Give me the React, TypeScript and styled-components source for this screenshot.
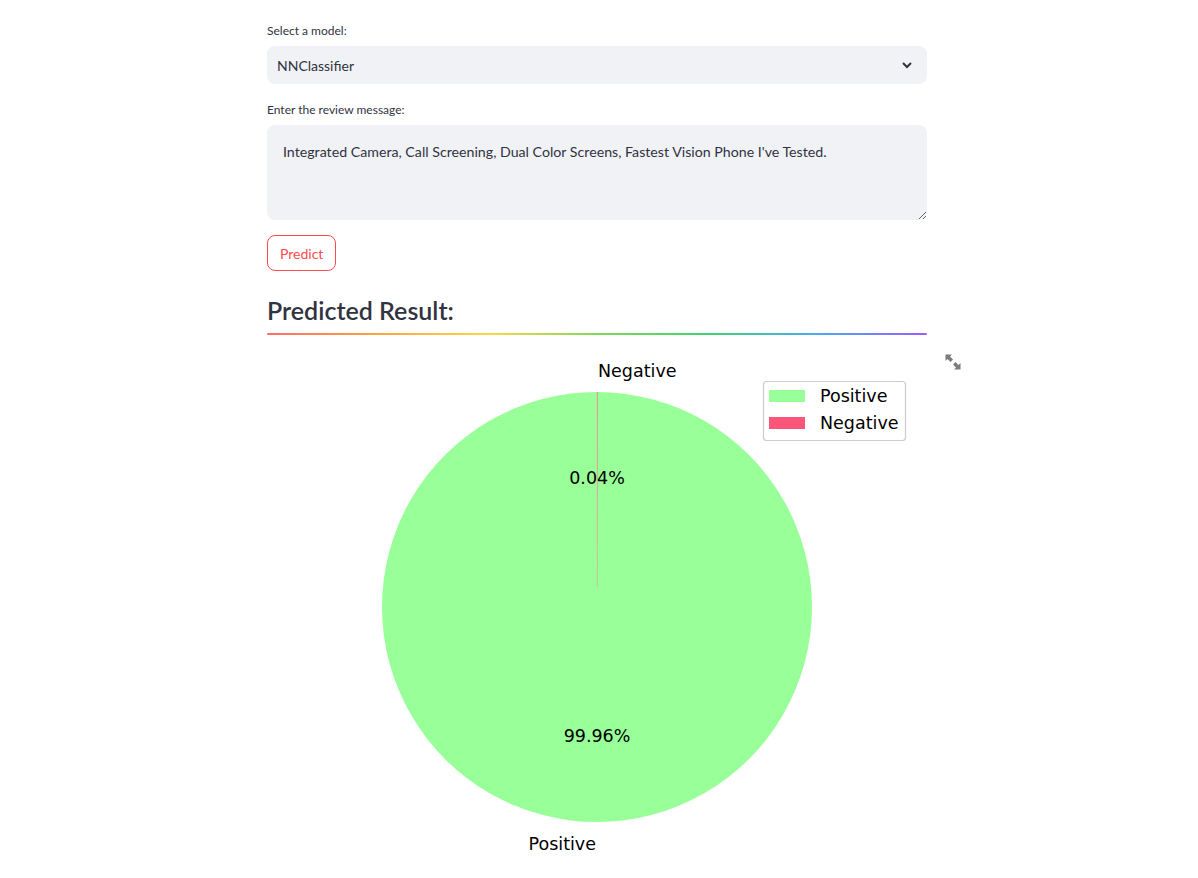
import React from "react";
import styled, { createGlobalStyle } from "styled-components";

const Global = createGlobalStyle`
  html, body { margin: 0; padding: 0; background: #ffffff; }
  body { font-family: Lato, "Open Sans", sans-serif; color: rgb(49, 51, 63); }
  * { box-sizing: border-box; }
`;

const Page = styled.div`
  display: flex;
  justify-content: center;
  padding: 22px 4px 0 0;
`;

const Column = styled.main`
  width: 660px;
  display: flex;
  flex-direction: column;
`;

const Field = styled.div`
  display: flex;
  flex-direction: column;
  margin-bottom: ${(p: { $mb?: number }) => p.$mb ?? 0}px;
`;

const Label = styled.label`
  font-size: 12px;
  line-height: 18px;
  height: 18px;
  margin-bottom: 6px;
  color: rgb(49, 51, 63);
`;

const SelectBox = styled.div`
  height: 38px;
  border-radius: 8px;
  background: rgb(240, 242, 246);
  display: flex;
  align-items: center;
  justify-content: space-between;
  padding: 0 14px 0 10px;
  font-size: 14px;
  color: rgb(49, 51, 63);
`;

const Chevron = styled.svg`
  width: 12px;
  height: 12px;
`;

const TextArea = styled.textarea`
  height: 95px;
  width: 100%;
  border: none;
  outline: none;
  border-radius: 8px;
  background: rgb(240, 242, 246);
  padding: 16px 16px;
  font-family: Lato, "Open Sans", sans-serif;
  font-size: 14.2px;
  line-height: 22px;
  color: rgb(49, 51, 63);
  resize: vertical;
  display: block;
`;

const ButtonRow = styled.div`
  display: flex;
  margin-top: 15px;
`;

const Button = styled.button`
  height: 36px;
  padding: 0 12px;
  border-radius: 8px;
  border: 1px solid rgb(255, 75, 75);
  background: #ffffff;
  color: rgb(255, 75, 75);
  font-family: Lato, "Open Sans", sans-serif;
  font-size: 14px;
`;

const Heading = styled.h3`
  margin: 24px 0 0 0;
  font-size: 25px;
  line-height: 30px;
  font-weight: 600;
  color: rgb(49, 51, 63);
`;

const Rainbow = styled.hr`
  margin: 8px 0 0 0;
  height: 2px;
  border: none;
  border-radius: 2px;
  background: linear-gradient(
    to right,
    #ff6c6c,
    #ffa33b,
    #ffd54a,
    #7ed957,
    #3dd56d,
    #4ba9f5,
    #9a5dff
  );
`;

const ChartWrap = styled.div`
  position: relative;
  margin-top: 12px;
`;

const Chart = styled.svg`
  display: block;
  width: 660px;
  height: 520px;
`;

const ExpandBtn = styled.svg`
  position: absolute;
  right: -34px;
  top: 7px;
  width: 16px;
  height: 16px;
`;

const CX = 330;
const CY = 260;
const R = 215;

function wedge(a0: number, a1: number) {
  const r = (d: number) => (d * Math.PI) / 180;
  const x0 = CX + R * Math.cos(r(a0));
  const y0 = CY - R * Math.sin(r(a0));
  const x1 = CX + R * Math.cos(r(a1));
  const y1 = CY - R * Math.sin(r(a1));
  const large = a1 - a0 > 180 ? 1 : 0;
  return `M${CX},${CY} L${x0},${y0} A${R},${R} 0 ${large} 0 ${x1},${y1} Z`;
}

const FONT = "'DejaVu Sans', sans-serif";

export default function App() {
  const negShare = 0.0004;
  const posEnd = 90 + 360 * (1 - negShare);
  return (
    <>
      <Global />
      <Page>
        <Column>
          <Field $mb={17}>
            <Label>Select a model:</Label>
            <SelectBox>
              <span>NNClassifier</span>
              <Chevron viewBox="0 0 12 12">
                <path d="M2 4 L6 8 L10 4" fill="none" stroke="rgb(49,51,63)" strokeWidth="2" />
              </Chevron>
            </SelectBox>
          </Field>
          <Field>
            <Label>Enter the review message:</Label>
            <TextArea
              readOnly
              defaultValue="Integrated Camera, Call Screening, Dual Color Screens, Fastest Vision Phone I've Tested."
            />
          </Field>
          <ButtonRow>
            <Button>Predict</Button>
          </ButtonRow>
          <Heading>Predicted Result:</Heading>
          <Rainbow />
          <ChartWrap>
            <Chart viewBox="0 0 660 520">
              <path d={wedge(90, posEnd)} fill="#99ff99" />
              <path d={wedge(posEnd, 450)} fill="#f9567a" />
              <line x1={CX + 0.25} y1={CY - R} x2={CX + 0.25} y2={CY - 20} stroke="#f07a8a" strokeWidth="0.5" strokeOpacity="0.8" />
              <text x={CX + 1} y={CY - 1.1 * R} fontFamily={FONT} fontSize="17.5" dominantBaseline="central" textAnchor="start" fill="#000">
                Negative
              </text>
              <text x={CX - 1} y={CY + 1.1 * R} fontFamily={FONT} fontSize="17.5" dominantBaseline="central" textAnchor="end" fill="#000">
                Positive
              </text>
              <text x={CX} y={CY - 0.6 * R} fontFamily={FONT} fontSize="17.5" dominantBaseline="central" textAnchor="middle" fill="#000">
                0.04%
              </text>
              <text x={CX} y={CY + 0.6 * R} fontFamily={FONT} fontSize="17.5" dominantBaseline="central" textAnchor="middle" fill="#000">
                99.96%
              </text>
              <rect x="496.5" y="34.5" width="142" height="59" rx="3" fill="#ffffff" fillOpacity="0.8" stroke="#cccccc" strokeWidth="1.2" />
              <rect x="502" y="43" width="36" height="12" fill="#99ff99" />
              <rect x="502" y="70" width="36" height="12" fill="#f9567a" />
              <text x="553" y="49" fontFamily={FONT} fontSize="17.5" dominantBaseline="central" fill="#000">
                Positive
              </text>
              <text x="553" y="76" fontFamily={FONT} fontSize="17.5" dominantBaseline="central" fill="#000">
                Negative
              </text>
            </Chart>
            <ExpandBtn viewBox="0 0 16 16">
              <path d="M0.5 0.5 L7 0.5 L5 2.5 L8 5.5 L5.5 8 L2.5 5 L0.5 7 Z" fill="#7d7d7d" />
              <path d="M15.5 15.5 L9 15.5 L11 13.5 L8 10.5 L10.5 8 L13.5 11 L15.5 9 Z" fill="#7d7d7d" />
            </ExpandBtn>
          </ChartWrap>
        </Column>
      </Page>
    </>
  );
}
